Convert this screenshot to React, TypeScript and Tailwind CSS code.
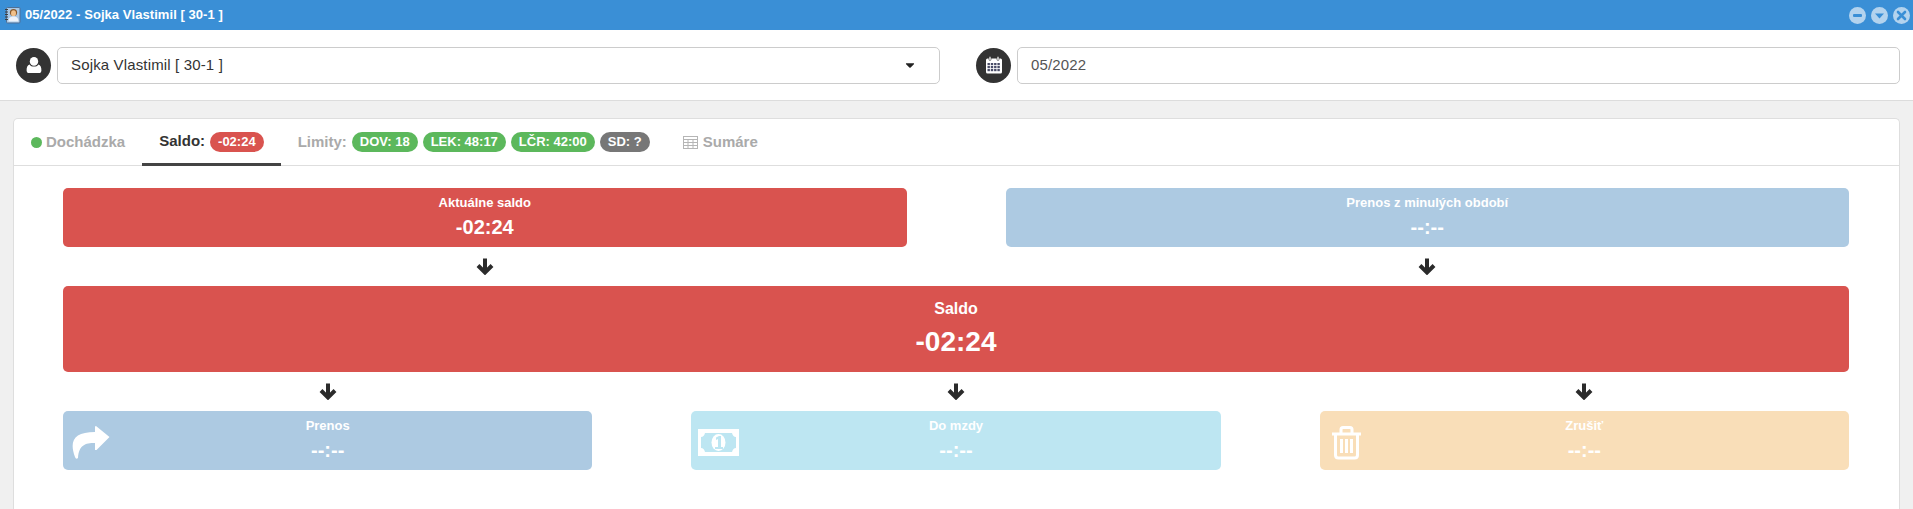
import { FaCaretDown } from 'react-icons/fa'

// Okenné tlačidlá v titulku
function WinButton({ kind }: { kind: 'min' | 'down' | 'close' }) {
  return (
    <svg width="17" height="17" viewBox="0 0 17 17">
      <circle cx="8.5" cy="8.5" r="8.5" fill="#b3d3ee" />
      {kind === 'min' && <rect x="4" y="7" width="9" height="3" rx="1" fill="#3a8fd6" />}
      {kind === 'down' && <path d="M4 6.5h9l-4.5 5z" fill="#3a8fd6" />}
      {kind === 'close' && <path d="M5 5l7 7M12 5l-7 7" stroke="#3a8fd6" strokeWidth="2.6" strokeLinecap="round" />}
    </svg>
  )
}

function BookIcon() {
  return (
    <svg width="17" height="17" viewBox="0 0 17 17" className="shrink-0">
      <rect x="2.5" y="0.5" width="13.5" height="15.5" rx="1" fill="#a9c8e6" stroke="#4f7197" />
      <path d="M1 2.5h3M1 5h3M1 7.5h3M1 10h3M1 12.5h3" stroke="#3d3d3d" strokeWidth="1" />
      <circle cx="9.5" cy="5.5" r="3.6" fill="#8a5a2b" />
      <ellipse cx="9.5" cy="6.2" rx="2.5" ry="3" fill="#f0c08a" />
      <path d="M4.5 14.5c0-4 2.2-5 5-5s5 1 5 5z" fill="#eef3fa" />
    </svg>
  )
}

function UserIcon() {
  return (
    <svg width="16" height="16" viewBox="0 0 16 16">
      <ellipse cx="8" cy="4.4" rx="4.2" ry="4.4" fill="#fff" />
      <path d="M3.6 7.4C4.5 9 6 9.6 8 9.6S11.5 9 12.4 7.4C14.6 8 15.4 10 15.4 13.4 15.4 15 14.4 16 13 16H3C1.6 16 .6 15 .6 13.4.6 10 1.4 8 3.6 7.4Z" fill="#fff" />
    </svg>
  )
}

function CalendarIcon() {
  return (
    <svg width="18" height="18" viewBox="0 0 18 18">
      <rect x="1" y="2.5" width="16" height="15" rx="1.5" fill="#fff" />
      <rect x="4" y="0.5" width="2" height="4" rx="1" fill="#fff" stroke="#333" strokeWidth="0.6" />
      <rect x="12" y="0.5" width="2" height="4" rx="1" fill="#fff" stroke="#333" strokeWidth="0.6" />
      {[7, 10, 13].map(y =>
        [2.5, 5.8, 9.1, 12.4].map(x => <rect key={`${x}-${y}`} x={x} y={y} width="2.4" height="2.2" fill="#4a4d68" />),
      )}
    </svg>
  )
}

function TableIcon() {
  return (
    <svg width="15" height="13" viewBox="0 0 15 13" fill="none" stroke="#b5b5b5" strokeWidth="1">
      <rect x="0.5" y="0.5" width="14" height="12" />
      <path d="M0.5 3.5h14M0.5 6.5h14M0.5 9.5h14M5 3.5v9M10 3.5v9" />
    </svg>
  )
}

function ArrowDown() {
  return (
    <svg width="18" height="17" viewBox="0 0 18 17">
      <path d="M9 0.5V14M2 7.5L9 14.5 16 7.5" fill="none" stroke="#2b2b2b" strokeWidth="4" />
    </svg>
  )
}

function ShareIcon() {
  return (
    <svg width="40" height="35" viewBox="0 0 40 35" className="absolute left-[8px] top-[14px]">
      <path d="M25 1L38.5 12 25.5 25H24V18C14 18 8 20 7 33Q5 35 4 32C-2 16 3 7 24 7V1.5Z" fill="#fff" />
    </svg>
  )
}

function MoneyIcon() {
  return (
    <svg width="41" height="27" viewBox="0 0 41 27" className="absolute left-[7px] top-[18px]">
      <path
        fillRule="evenodd"
        fill="#fff"
        d="M0 0H41V27H0ZM7 4Q6 8 3 8V19Q6 19 7 23H34Q35 19 38 19V8Q35 8 34 4Z"
      />
      <ellipse cx="20.5" cy="13.5" rx="7" ry="8.5" fill="#fff" />
      <path d="M18 8.5L21 7H23V18H25V20H17V18H20V10L18 11Z" fill="#bde6f2" />
    </svg>
  )
}

function TrashIcon() {
  return (
    <svg width="32" height="34" viewBox="0 0 32 34" className="absolute left-[11px] top-[15px]">
      <path d="M1 8H30M10 7V3.5Q10 1.5 12 1.5H19Q21 1.5 21 3.5V7" fill="none" stroke="#fff" strokeWidth="3" />
      <path d="M4.5 8V29Q4.5 32 7.5 32H23.5Q26.5 32 26.5 29V8" fill="none" stroke="#fff" strokeWidth="3" />
      <path d="M10.5 13V27M15.5 13V27M20.5 13V27" stroke="#fff" strokeWidth="3" />
    </svg>
  )
}

function Badge({ color, children }: { color: string; children: React.ReactNode }) {
  return (
    <span className={`inline-flex h-[20px] items-center rounded-full px-[8px] text-[13px] font-bold text-white ${color}`}>
      {children}
    </span>
  )
}

function Box({ label, value, color, icon }: { label: string; value: string; color: string; icon?: React.ReactNode }) {
  return (
    <div className={`relative flex h-[59px] flex-col items-center rounded-[5px] pt-[6px] text-white ${color}`}>
      {icon}
      <div className="text-[13px] font-bold leading-[18px]">{label}</div>
      <div className="mt-[2px] text-[20px] font-bold leading-[26px]">{value}</div>
    </div>
  )
}

function Arrow() {
  return (
    <div className="flex h-[39px] items-center justify-center">
      <ArrowDown />
    </div>
  )
}

export default function App() {
  return (
    <div className="h-[509px] overflow-hidden bg-[#f0f0f0] font-['Liberation_Sans',Arial,sans-serif]">
      {/* Titulok */}
      <div className="flex h-[30px] items-center bg-[#3a8fd6] pl-[4px] pr-[3px]">
        <BookIcon />
        <span className="ml-[4px] text-[13px] font-bold tracking-[0.06px] text-white">05/2022 - Sojka Vlastimil [ 30-1 ]</span>
        <div className="ml-auto flex gap-[5px]">
          <WinButton kind="min" />
          <WinButton kind="down" />
          <WinButton kind="close" />
        </div>
      </div>

      {/* Výber zamestnanca a obdobia */}
      <div className="grid h-[71px] grid-cols-2 items-center gap-[36px] border-b border-[#dcdcdc] bg-white pl-[16px] pr-[13px]">
        <div className="flex items-center gap-[6px]">
          <div className="flex h-[35px] w-[35px] shrink-0 items-center justify-center rounded-full bg-[#333]">
            <UserIcon />
          </div>
          <div className="flex h-[37px] flex-1 items-center justify-between rounded-[5px] border border-[#ccc] pl-[13px] pr-[22px] text-[15px] tracking-[0.15px] text-[#333]">
            Sojka Vlastimil [ 30-1 ]
            <FaCaretDown size={14} className="text-[#222]" />
          </div>
        </div>
        <div className="flex items-center gap-[6px]">
          <div className="flex h-[35px] w-[35px] shrink-0 items-center justify-center rounded-full bg-[#333]">
            <CalendarIcon />
          </div>
          <div className="flex h-[37px] flex-1 items-center rounded-[5px] border border-[#ccc] pl-[13px] text-[15px] tracking-[0.15px] text-[#555]">
            05/2022
          </div>
        </div>
      </div>

      {/* Karta */}
      <div className="ml-[13px] mr-[13px] mt-[17px] h-[400px] rounded-t-[5px] border border-b-0 border-[#dedede] bg-white">
        <div className="flex h-[47px] items-stretch border-b border-[#dedede] text-[15px] font-bold text-[#aaa]">
          <div className="flex items-center gap-[4px] px-[17px]">
            <span className="h-[11px] w-[11px] rounded-full bg-[#5cb85c]" />
            Dochádzka
          </div>
          <div className="-mb-px flex items-center gap-[5px] border-b-[3px] border-[#444] px-[17px] pt-[1px] text-[#333]">
            Saldo:
            <Badge color="bg-[#d9534f]">-02:24</Badge>
          </div>
          <div className="flex items-center gap-[5px] px-[17px]">
            Limity:
            <Badge color="bg-[#5cb85c]">DOV: 18</Badge>
            <Badge color="bg-[#5cb85c]">LEK: 48:17</Badge>
            <Badge color="bg-[#5cb85c]">LČR: 42:00</Badge>
            <Badge color="bg-[#777]">SD: ?</Badge>
          </div>
          <div className="flex items-center gap-[5px] pl-[16px]">
            <TableIcon />
            Sumáre
          </div>
        </div>

        <div className="pl-[49px] pr-[50px] pt-[22px]">
          <div className="grid grid-cols-2 gap-x-[99px]">
            <Box label="Aktuálne saldo" value="-02:24" color="bg-[#d9534f]" />
            <Box label="Prenos z minulých období" value="--:--" color="bg-[#adcae2]" />
            <Arrow />
            <Arrow />
          </div>
          <div className="flex h-[86px] flex-col items-center rounded-[5px] bg-[#d9534f] pt-[11px] text-white">
            <div className="text-[16px] font-bold leading-[24px]">Saldo</div>
            <div className="mt-[3px] text-[28px] font-bold leading-[36px]">-02:24</div>
          </div>
          <div className="grid grid-cols-3 gap-x-[99px]">
            <Arrow />
            <Arrow />
            <Arrow />
            <Box label="Prenos" value="--:--" color="bg-[#adcae2]" icon={<ShareIcon />} />
            <Box label="Do mzdy" value="--:--" color="bg-[#bde6f2]" icon={<MoneyIcon />} />
            <Box label="Zrušiť" value="--:--" color="bg-[#f9deb8]" icon={<TrashIcon />} />
          </div>
        </div>
      </div>
    </div>
  )
}
